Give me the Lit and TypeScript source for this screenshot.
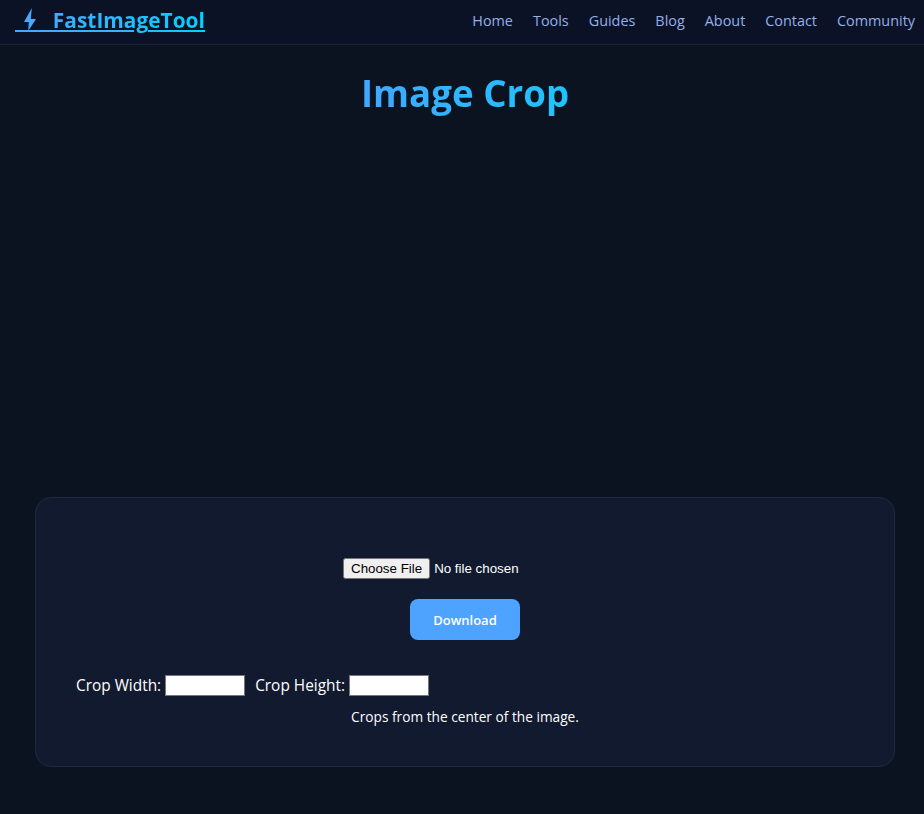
import { LitElement, html, css } from "lit";
import { customElement } from "lit/decorators.js";

@customElement("app-root")
export class AppRoot extends LitElement {
  static styles = css`
    :host { display: block; min-height: 814px; background: #0b1220; color: #fff; font-family: "Open Sans", "Noto Sans", sans-serif; }
    * { box-sizing: border-box; }
    header { height: 45px; display: flex; align-items: center; justify-content: space-between; padding: 0 9px 3px 15px; background: #0b1226; border-bottom: 1px solid #1b2636; }
    .logo {
      display: block; font-size: 20.9px; line-height: 26px; font-weight: 700; white-space: pre; color: transparent; text-decoration: none;
      background-image:
        linear-gradient(90deg, #4da3ff, #00d2ff),
        linear-gradient(90deg, #4da3ff 0, #2db7ff 62.4%, transparent 62.4%, transparent 69.8%, #22bcff 69.8%, #00d2ff 100%);
      background-repeat: no-repeat;
      background-position: 0 0, 0 23px;
      background-size: 100% 100%, 100% 2px;
      -webkit-background-clip: text, border-box;
      background-clip: text, border-box;
    }
    .logo svg { vertical-align: -6px; overflow: visible; }
    nav { display: flex; gap: 20px; }
    nav a { color: #93b0e8; font-size: 14.4px; text-decoration: none; }
    main { margin: 0 29px 0 35px; }
    h1 { margin: 0; height: 96px; padding-top: 23px; text-align: center; font-size: 36.7px; line-height: 50px; font-weight: 700; }
    h1 span { background: linear-gradient(90deg, #3fa8ff, #1ec4ff); -webkit-background-clip: text; background-clip: text; color: transparent; }
    .ad { height: 356px; }
    .card { height: 270px; padding: 60px 40px 0; background: #121a2f; border: 1px solid #1e2a40; border-radius: 16px; text-align: center; }
    input[type="file"] { display: block; width: 244px; margin: 0 auto; color: #fff; font-size: 13.33px; font-family: "Liberation Sans", sans-serif; }
    .btnrow { margin-top: 20px; }
    button.dl { width: 110px; height: 41px; border: 0; border-radius: 8px; background: #4da3ff; color: #fff; font: 600 13px "Open Sans", sans-serif; }
    .row { margin-top: 35px; display: flex; align-items: center; font-size: 15.4px; }
    .row label { display: flex; align-items: center; gap: 4px; margin-right: 10px; height: 21px; }
    .row label span { margin-top: -1px; }
    .row input { width: 80px; height: 21px; background: #fff; border: 1px solid #767676; padding: 1px 2px; }
    .note { margin: 11px 0 0; font-size: 13.7px; }
  `;

  render() {
    return html`
      <header>
        <a class="logo"><svg width="27" height="24" viewBox="0 0 27 24"><path fill="#4aa8ff" d="M16.8 -2 L9 12 H13.8 L13.2 21 L21 9 H15.8 Z"/></svg>  FastImageTool</a>
        <nav>${["Home", "Tools", "Guides", "Blog", "About", "Contact", "Community"].map((n) => html`<a>${n}</a>`)}</nav>
      </header>
      <main>
        <h1><span>Image Crop</span></h1>
        <div class="ad"></div>
        <section class="card">
          <input type="file" />
          <div class="btnrow"><button class="dl">Download</button></div>
          <div class="row">
            <label><span>Crop Width:</span> <input type="text" /></label>
            <label><span>Crop Height:</span> <input type="text" /></label>
          </div>
          <p class="note">Crops from the center of the image.</p>
        </section>
      </main>
    `;
  }
}
